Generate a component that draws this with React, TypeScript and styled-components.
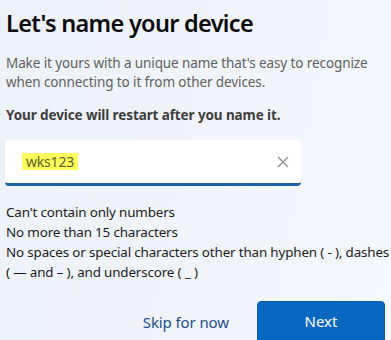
import React from "react";
import styled, { createGlobalStyle } from "styled-components";

const Global = createGlobalStyle`
  html, body { margin: 0; padding: 0; }
  body {
    width: 391px;
    height: 340px;
    overflow: hidden;
    background: linear-gradient(100deg, #edf1f9 0%, #f1f4fa 60%, #f5f8fc 100%);
    font-family: "Noto Sans", "Open Sans", Arial, sans-serif;
  }
`;

const Page = styled.div`
  display: flex;
  flex-direction: column;
  padding: 0 0 0 6px;
  width: 391px;
  height: 340px;
  box-sizing: border-box;
`;

const Title = styled.h1`
  margin: 6px 0 0 0;
  font-size: 23.5px;
  line-height: 34px;
  font-weight: 600;
  color: #0b0b0b;
  letter-spacing: -0.7px;
`;

const Lead = styled.p`
  margin: 14px 0 0 0;
  font-size: 13.5px;
  line-height: 19px;
  color: #616161;
  width: 375px;
  letter-spacing: -0.1px;
`;

const Warning = styled.p`
  margin: 14px 0 0 0;
  font-size: 13.5px;
  line-height: 19px;
  font-weight: 700;
  color: #3d3d3d;
  letter-spacing: -0.1px;
`;

const Field = styled.div`
  margin: 15px 0 0 -1px;
  width: 296px;
  height: 46px;
  box-sizing: border-box;
  background: #ffffff;
  border-radius: 4px;
  border-bottom: 3px solid #1c63a6;
  display: flex;
  align-items: center;
  padding: 0 8px 0 17px;
`;

const Value = styled.span`
  background: #ffff5c;
  color: #5f5f28;
  font-size: 14px;
  line-height: 17px;
  padding: 0 4px 0 4px;
  letter-spacing: -0.2px;
`;

const Spacer = styled.div`
  flex: 1;
`;

const Clear = styled.svg`
  width: 12px;
  height: 12px;
  margin-right: 4px;
  margin-top: 1px;
`;

const Rules = styled.ul`
  list-style: none;
  margin: 16px 0 0 0;
  padding: 0;
  font-size: 13.4px;
  line-height: 20px;
  color: #1c1c1c;
  white-space: nowrap;
  letter-spacing: -0.15px;
`;

const Rule = styled.li`
  margin: 0;
`;

const Actions = styled.div`
  display: flex;
  justify-content: flex-end;
  align-items: flex-start;
  margin-top: auto;
  gap: 28px;
`;

const LinkButton = styled.button`
  background: transparent;
  border: 0;
  padding: 0;
  margin-top: 10px;
  font-family: inherit;
  font-size: 15px;
  line-height: 22px;
  color: #1d4e8d;
  cursor: pointer;
  letter-spacing: -0.1px;
`;

const PrimaryButton = styled.button`
  width: 128px;
  height: 44px;
  margin-right: 6px;
  margin-bottom: -5px;
  background: #0867c1;
  border: 1px solid #0a5eaf;
  border-radius: 4px;
  color: #ffffff;
  font-family: inherit;
  font-size: 15px;
  line-height: 22px;
  padding: 0 0 4px 0;
  cursor: pointer;
`;

export default function App() {
  return (
    <>
      <Global />
      <Page>
        <Title>Let's name your device</Title>
        <Lead>
          Make it yours with a unique name that's easy to recognize when
          connecting to it from other devices.
        </Lead>
        <Warning>Your device will restart after you name it.</Warning>
        <Field>
          <Value>wks123</Value>
          <Spacer />
          <Clear viewBox="0 0 12 12">
            <path d="M1 1 L11 11 M11 1 L1 11" stroke="#8a8a8a" strokeWidth="1.2" fill="none" />
          </Clear>
        </Field>
        <Rules>
          <Rule>Can't contain only numbers</Rule>
          <Rule>No more than 15 characters</Rule>
          <Rule>
            No spaces or special characters other than hyphen ( - ), dashes
            <br />( — and – ), and underscore ( _ )
          </Rule>
        </Rules>
        <Actions>
          <LinkButton>Skip for now</LinkButton>
          <PrimaryButton>Next</PrimaryButton>
        </Actions>
      </Page>
    </>
  );
}
